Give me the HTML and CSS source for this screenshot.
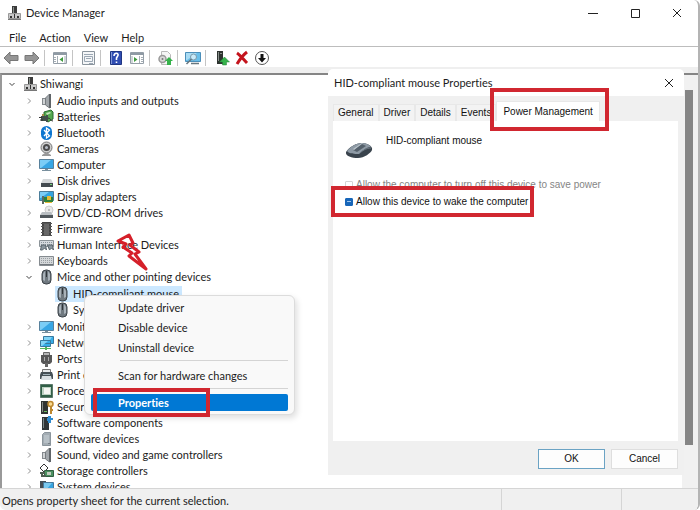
FILE: index.html
```html
<!DOCTYPE html>
<html lang="en">
<head>
<meta charset="utf-8">
<title>Device Manager</title>
<link rel="stylesheet" href="styles.css">
</head>
<body>
<svg class="sprite" aria-hidden="true">
  <symbol id="pc" viewBox="0 0 16 16"><path fill="#3c3c3c" d="M6 1h5v8H6z"/><path fill="#8d9590" d="M7 2h1v6H7z"/><path fill="#c9c9c9" stroke="#999" d="M2.500 8.500h12v5h-12z"/><path fill="#333" d="M4 11h2v2H4zM11 11h2v2h-2zM8 9h1v4H8z"/><path fill="#777" d="M2 14h13v1H2z"/></symbol>
  <symbol id="speaker" viewBox="0 0 16 16"><path fill="#858a8e" d="M3 5h4v7H3z"/><path fill="#a3a8ac" stroke="#777c80" d="M6.500 5l4-4v14l-4-3z"/><path fill="#5f6468" d="M10 1h2v14h-2z"/><path fill="#d0d3d5" d="M4 6h2v5H4z"/></symbol>
  <symbol id="battery" viewBox="0 0 16 16"><path fill="#54a84f" stroke="#2b6a30" d="M5 3l7-2 2 2v7l-5 3-4-3z"/><path fill="#c8e6bf" d="M7 4l4-1 1 1-4 2z"/><path fill="#41504a" d="M2 7h5V6h2v7H7v-1H2z"/><path fill="none" stroke="#333" d="M0 8.500h3M1 11h3M9 9c3 0 2 3 5 3"/><path fill="#a78d4d" d="M3 5h2v2H3z"/></symbol>
  <symbol id="bt" viewBox="0 0 16 16"><rect x="2" y="1" width="11" height="14" rx="5.500" fill="#0c76d0"/><path fill="none" stroke="#fff" stroke-width="1.300" d="M5 5l5.500 6-3 2V3l3 2L5 11"/></symbol>
  <symbol id="camera" viewBox="0 0 16 16"><circle cx="7.500" cy="6.500" r="5.500" fill="#cfcfcf" stroke="#777"/><circle cx="7.500" cy="6.500" r="3.500" fill="#4c4c4c"/><circle cx="7.500" cy="6.500" r="1.500" fill="#b8bec8"/><path fill="#999" d="M3 14l3-2h3l3 2v1H3z"/></symbol>
  <symbol id="monitor" viewBox="0 0 16 16"><path fill="#38a6e4" stroke="#58819c" d="M.5 2.500h14v9H.5z"/><path fill="#7bcdf6" d="M1 3h11L2 11H1z"/><path fill="#79909e" d="M6 12h3v1h3v1H3v-1h3z"/></symbol>
  <symbol id="disk" viewBox="0 0 16 16"><path fill="#d4d7d9" d="M4 6h8l2 4H2z"/><path fill="#444b50" d="M2 10h12v4H2z"/><path fill="#73d477" d="M11 11h2v1h-2z"/></symbol>
  <symbol id="display" viewBox="0 0 16 16"><path fill="#35a4df" stroke="#4b7d9a" d="M.5 2.500h14v9H.5z"/><path fill="#7bcdf6" d="M1 3h9L2 9H1z"/><path fill="#2f813b" d="M5 8h9v5H5z"/><path fill="#e8bb36" d="M8 7h4v4H8zM6 13h7v1H6z"/><path fill="#5d6a64" d="M3 7h2v8H3z"/></symbol>
  <symbol id="dvd" viewBox="0 0 16 16"><circle cx="10" cy="5" r="4" fill="#e9e9e9" stroke="#ccc"/><circle cx="10" cy="5" r="1" fill="#aaa"/><path fill="#b9bec2" d="M3 7h9l2 3H1z"/><path fill="#50575c" d="M1 10h13v3H1z"/></symbol>
  <symbol id="chip" viewBox="0 0 16 16"><path fill="#454545" d="M3 1h9v14H3z"/><path fill="none" stroke="#555" d="M2 2.500h11M2 5.500h11M2 8.500h11M2 11.500h11M2 14.500h11"/><path fill="#676767" d="M5 3h5v11H5z"/></symbol>
  <symbol id="hid" viewBox="0 0 16 16"><path fill="#d5dade" stroke="#8b9398" d="M.5 3.500h14v6H.5z"/><path stroke="#8b969d" stroke-dasharray="1" d="M2 5.500h11M2 7.500h11"/><path fill="#8a969e" stroke="#59656c" d="M1.500 13l1-5h4l1 5-2-2-2 2zM8.500 8h5l1 5-2-2-2 2z"/></symbol>
  <symbol id="keyboard" viewBox="0 0 16 16"><path fill="#d4d7d9" stroke="#858b90" d="M.5 3.500h14v9H.5z"/><path stroke="#999fa3" stroke-dasharray="1 1" d="M2 5.500h11M2 7.500h11M2 9.500h11"/><path fill="#72787d" d="M1 11h13v1H1z"/></symbol>
  <symbol id="mouse" viewBox="0 0 16 16"><rect x="3" y="1" width="9" height="14" rx="4" fill="#707980" stroke="#3b4248"/><path fill="#a9b2b9" d="M4 5l2-3v10l-2-1zM9 2l2 3v6l-2 1z"/><path fill="#303539" d="M7 2h1v6H7z"/></symbol>
  <symbol id="network" viewBox="0 0 16 16"><path fill="#37aee9" stroke="#397a9f" d="M4.500 1.500h10v7h-10zM1.500 5.500h10v6h-10z"/><path fill="#81d4f6" d="M5 2h8l-2 3H5zM2 6h7l-6 5H2z"/><path fill="#55b65b" d="M1 13h11v1H1zM6 12h2v3H6z"/></symbol>
  <symbol id="port" viewBox="0 0 16 16"><path fill="#b6b6b6" stroke="#686868" d="M4.500 1.500h6v4h-6z"/><path fill="#575757" d="M2 4h11v7l-2 2H4l-2-2z"/><path fill="#aaa" d="M5 6h1v4H5zM9 6h1v4H9z"/><path fill="#666" d="M6 12h3v4H6z"/></symbol>
  <symbol id="printer" viewBox="0 0 16 16"><path fill="#e6eaec" stroke="#777" d="M3.500 2.500h8v4h-8z"/><path fill="#455056" d="M2 5h11l1 3v4H1V8z"/><path fill="#d9e0e4" d="M3 9h9l1 4H2z"/><path fill="#9fb0b8" d="M4 7h7v1H4z"/></symbol>
  <symbol id="cpu" viewBox="0 0 16 16"><path fill="#315f46" stroke="#214532" stroke-dasharray="1 1" d="M1.500 1.500h12v13h-12z"/><path fill="#bdd1c2" d="M3 4h9v8H3z"/><path fill="#f5f6f2" d="M5 5h6v6H5z"/></symbol>
  <symbol id="security" viewBox="0 0 16 16"><path fill="#303432" d="M2 2h7v13H2z"/><path fill="#858b87" d="M3 3h1v10H3z"/><path fill="#6bbf5f" d="M5 12h3v1H5z"/><circle cx="11.500" cy="5" r="2.500" fill="#f8d98f" stroke="#bc8830" stroke-width="1.500"/><path fill="none" stroke="#bc8830" stroke-width="2" d="M12 8v7M12 11h2"/></symbol>
  <symbol id="component" viewBox="0 0 16 16"><path fill="#303638" d="M3 2h7v13H3z"/><path fill="#7b8788" d="M4 3h1v10H4z"/><path fill="#2f8bce" d="M9 1h3v2h2v2h-2v3H9V6H8V3h1z"/></symbol>
  <symbol id="software" viewBox="0 0 16 16"><path fill="#a3acb3" stroke="#8b959c" d="M3.500 3.500l2-2h6v13h-8z"/><path fill="#b7c0c6" d="M5 4h5v8H5z"/><path fill="#778087" d="M9 12h2v1H9z"/></symbol>
  <symbol id="storage" viewBox="0 0 16 16"><path fill="#fff" stroke="#333" d="M1 5l4-4 4 4-4 4z"/><path fill="#4c9160" stroke="#315e40" d="M5.500 7.500h9v6h-9z"/><path fill="#c2ccbe" d="M8 9h4v3H8z"/><path fill="none" stroke="#4e5d50" stroke-width="2" d="M1 10h5M3 9v4h4"/></symbol>
  <symbol id="system" viewBox="0 0 16 16"><path fill="#454e54" d="M1 2h6v13H1z"/><path fill="#36a3df" stroke="#47799a" d="M4.500 3.500h10v8h-10z"/><path fill="#7ac9ef" d="M5 4h8l-6 7H5z"/></symbol>
  <symbol id="back" viewBox="0 0 16 16"><path fill="#969696" stroke="#777" d="M1 8l6-6v3.500h8v5H7V14z"/></symbol>
  <symbol id="forward" viewBox="0 0 16 16"><path fill="#969696" stroke="#777" d="M15 8L9 2v3.500H1v5h8V14z"/></symbol>
  <symbol id="pane" viewBox="0 0 16 16"><path fill="#fff" stroke="#959fa8" d="M1.500 2.500h13v11h-13z"/><path fill="#8f9aa4" d="M1 3h14v2H1z"/><path stroke="#a5aeb5" d="M5.500 6v7M2 7.500h2M2 9.500h2M2 11.500h2M13 6v7"/><path fill="#3f9a3f" d="M11 7v5L7.500 9.500z"/></symbol>
  <symbol id="actions" viewBox="0 0 16 16"><path fill="#fff" stroke="#959fa8" d="M1.500 2.500h13v11h-13z"/><path fill="#8f9aa4" d="M1 3h14v2H1z"/><path stroke="#a5aeb5" d="M10.500 6v7M3 6v7M12 7.500h2M12 9.500h2M12 11.500h2"/><path fill="#3f9a3f" d="M5 7v5l3.500-2.500z"/></symbol>
  <symbol id="sheet" viewBox="0 0 16 16"><path fill="#f4f6f8" stroke="#8a949d" d="M2.500 1.500h12v13h-12z"/><path fill="none" stroke="#9ca8b4" d="M4 4.500h9M4.500 6.500h8v5h-8zM6 8.500h5M9 13.500h4"/></symbol>
  <symbol id="help" viewBox="0 0 16 16"><path fill="#304db2" stroke="#203682" d="M2.500 1.500h11v13h-11z"/><path fill="#8096d8" d="M3 2h1v12H3z"/><path fill="none" stroke="#fff" stroke-width="1.600" d="M6 6c0-4 5-3 4-.5L8.500 8v2M8.500 11.500v1.500"/></symbol>
  <symbol id="scan" viewBox="0 0 16 16"><path fill="#f5f5f5" stroke="#b9b9b9" d="M4.500 1.500h6l3 3v10h-9z"/><circle cx="5.500" cy="9" r="3.500" fill="#d8d8d8" stroke="#999" stroke-width="1.500"/><circle cx="5.500" cy="9" r="1" fill="#777"/><path fill="#35b24a" d="M12 7l4 4h-2v4h-4v-4H8z"/></symbol>
  <symbol id="search" viewBox="0 0 16 16"><path fill="#69bee9" stroke="#4b8eb9" d="M.5 2.500h15v9H.5z"/><path fill="#a9dcf4" d="M1 3h11L2 10H1z"/><circle cx="8.500" cy="7" r="3" fill="#caeaf8" stroke="#7b99aa"/><path fill="none" stroke="#68777f" stroke-width="1.500" d="M6.500 9l-5 5M6 13.500h8"/></symbol>
  <symbol id="update" viewBox="0 0 16 16"><path fill="#2e3330" d="M3 1h6v13H3z"/><path fill="#89908c" d="M4 2h1v9H4zM6 3h2v1H6z"/><path fill="#35b24a" stroke="#228336" stroke-width=".5" d="M10.500 7l5 5h-3v3h-4v-3h-3z"/></symbol>
  <symbol id="remove" viewBox="0 0 16 16"><path fill="none" stroke="#c4141d" stroke-width="3" d="M3 3c3 2 6 6 10 10M13 2C9 5 6 9 3 14"/></symbol>
  <symbol id="down" viewBox="0 0 16 16"><circle cx="8" cy="8" r="6.500" fill="#fff" stroke="#555"/><path fill="#111" d="M6.500 4h3v4H12l-4 4.500L4 8h2.500z"/></symbol>
  <symbol id="chev" viewBox="0 0 8 8"><path fill="none" stroke="#909090" d="M3 1.500L5.500 4 3 6.500"/></symbol>
  <symbol id="open" viewBox="0 0 8 8"><path fill="none" stroke="#444" d="M1.500 3L4 5.500 6.500 3"/></symbol>
  <symbol id="close" viewBox="0 0 10 10"><path fill="none" stroke="#222" d="M1 1l8 8M9 1L1 9"/></symbol>
</svg>

<div class="window">
  <header class="titlebar">
    <svg class="icon"><use href="#pc"/></svg>
    <h1>Device Manager</h1>
    <div class="controls">
      <button aria-label="Minimize"><svg viewBox="0 0 10 10"><path stroke="#222" d="M0 5.500h10"/></svg></button>
      <button aria-label="Maximize"><svg viewBox="0 0 10 10"><path fill="none" stroke="#222" d="M1.500 1.500h8v8h-8z"/></svg></button>
      <button aria-label="Close"><svg><use href="#close"/></svg></button>
    </div>
  </header>
  <nav class="menubar">
    <button>File</button><button>Action</button><button>View</button><button>Help</button>
  </nav>
  <div class="toolbar">
    <div class="tools"><button aria-label="Back"><svg class="icon"><use href="#back"/></svg></button><button aria-label="Forward"><svg class="icon"><use href="#forward"/></svg></button></div>
    <div class="tools"><button aria-label="Console tree"><svg class="icon"><use href="#pane"/></svg></button></div>
    <div class="tools"><button aria-label="Properties"><svg class="icon"><use href="#sheet"/></svg></button></div>
    <div class="tools"><button aria-label="Help"><svg class="icon"><use href="#help"/></svg></button><button aria-label="Action pane"><svg class="icon"><use href="#actions"/></svg></button></div>
    <div class="tools"><button aria-label="Update driver"><svg class="icon"><use href="#scan"/></svg></button></div>
    <div class="tools"><button aria-label="Scan for hardware changes"><svg class="icon"><use href="#search"/></svg></button></div>
    <div class="tools"><button aria-label="Enable device"><svg class="icon"><use href="#update"/></svg></button><button aria-label="Uninstall device"><svg class="icon"><use href="#remove"/></svg></button><button aria-label="Disable device"><svg class="icon"><use href="#down"/></svg></button></div>
  </div>
  <main class="content">
    <ul class="tree">
      <li><div class="row"><svg class="arrow"><use href="#open"/></svg><svg class="icon"><use href="#pc"/></svg>Shiwangi</div>
        <ul>
          <li class="row"><svg class="arrow"><use href="#chev"/></svg><svg class="icon"><use href="#speaker"/></svg>Audio inputs and outputs</li>
          <li class="row"><svg class="arrow"><use href="#chev"/></svg><svg class="icon"><use href="#battery"/></svg>Batteries</li>
          <li class="row"><svg class="arrow"><use href="#chev"/></svg><svg class="icon"><use href="#bt"/></svg>Bluetooth</li>
          <li class="row"><svg class="arrow"><use href="#chev"/></svg><svg class="icon"><use href="#camera"/></svg>Cameras</li>
          <li class="row"><svg class="arrow"><use href="#chev"/></svg><svg class="icon"><use href="#monitor"/></svg>Computer</li>
          <li class="row"><svg class="arrow"><use href="#chev"/></svg><svg class="icon"><use href="#disk"/></svg>Disk drives</li>
          <li class="row"><svg class="arrow"><use href="#chev"/></svg><svg class="icon"><use href="#display"/></svg>Display adapters</li>
          <li class="row"><svg class="arrow"><use href="#chev"/></svg><svg class="icon"><use href="#dvd"/></svg>DVD/CD-ROM drives</li>
          <li class="row"><svg class="arrow"><use href="#chev"/></svg><svg class="icon"><use href="#chip"/></svg>Firmware</li>
          <li class="row"><svg class="arrow"><use href="#chev"/></svg><svg class="icon"><use href="#hid"/></svg>Human Interface Devices</li>
          <li class="row"><svg class="arrow"><use href="#chev"/></svg><svg class="icon"><use href="#keyboard"/></svg>Keyboards</li>
          <li><div class="row"><svg class="arrow"><use href="#open"/></svg><svg class="icon"><use href="#mouse"/></svg>Mice and other pointing devices</div>
            <ul class="leaves">
              <li class="row selected"><svg class="icon"><use href="#mouse"/></svg>HID-compliant mouse</li>
              <li class="row"><svg class="icon"><use href="#mouse"/></svg>Sy</li>
            </ul>
          </li>
          <li class="row"><svg class="arrow"><use href="#chev"/></svg><svg class="icon"><use href="#monitor"/></svg>Monitors</li>
          <li class="row"><svg class="arrow"><use href="#chev"/></svg><svg class="icon"><use href="#network"/></svg>Network</li>
          <li class="row"><svg class="arrow"><use href="#chev"/></svg><svg class="icon"><use href="#port"/></svg>Ports</li>
          <li class="row"><svg class="arrow"><use href="#chev"/></svg><svg class="icon"><use href="#printer"/></svg>Print queues</li>
          <li class="row"><svg class="arrow"><use href="#chev"/></svg><svg class="icon"><use href="#cpu"/></svg>Processors</li>
          <li class="row"><svg class="arrow"><use href="#chev"/></svg><svg class="icon"><use href="#security"/></svg>Security</li>
          <li class="row"><svg class="arrow"><use href="#chev"/></svg><svg class="icon"><use href="#component"/></svg>Software components</li>
          <li class="row"><svg class="arrow"><use href="#chev"/></svg><svg class="icon"><use href="#software"/></svg>Software devices</li>
          <li class="row"><svg class="arrow"><use href="#chev"/></svg><svg class="icon"><use href="#speaker"/></svg>Sound, video and game controllers</li>
          <li class="row"><svg class="arrow"><use href="#chev"/></svg><svg class="icon"><use href="#storage"/></svg>Storage controllers</li>
          <li class="row"><svg class="arrow"><use href="#chev"/></svg><svg class="icon"><use href="#system"/></svg>System devices</li>
        </ul>
      </li>
    </ul>
    <div class="scrollbar"><div class="thumb"></div></div>
  </main>
  <footer class="statusbar"><span>Opens property sheet for the current selection.</span><span></span><span></span></footer>

  <div class="context" role="menu">
    <button role="menuitem">Update driver</button>
    <button role="menuitem">Disable device</button>
    <button role="menuitem">Uninstall device</button>
    <hr>
    <button role="menuitem">Scan for hardware changes</button>
    <hr>
    <button role="menuitem" class="active">Properties</button>
  </div>

  <section class="dialog" role="dialog" aria-labelledby="dialog-title">
    <header><h2 id="dialog-title">HID-compliant mouse Properties</h2><button aria-label="Close"><svg><use href="#close"/></svg></button></header>
    <div class="dialog-body">
      <div class="tabs" role="tablist">
        <button role="tab">General</button><button role="tab">Driver</button><button role="tab">Details</button><button role="tab">Events</button><button role="tab" class="current" aria-selected="true">Power Management</button>
      </div>
      <div class="panel" role="tabpanel">
        <div class="device">
          <svg viewBox="0 0 28 18"><path fill="#39434c" d="M1 11c3-5 10-9 16-9 5 0 11 3 10 7-1 3-8 8-14 8C7 17 0 15 1 11z"/><path fill="#8e9aa5" d="M2 10C6 5 12 2 17 2c3 0 7 1 9 4-4 0-8 3-12 7-4 0-10 0-12-3z"/><path fill="#55616c" d="M8 9l9-6 4 2-9 6z"/><path fill="#bdc6cd" d="M8 8l9-6h1L9 9z"/><path fill="none" stroke="#6c7883" d="M14 13c3-3 7-6 12-6"/></svg>
          <span>HID-compliant mouse</span>
        </div>
        <label class="off"><input type="checkbox" disabled>Allow the computer to turn off this device to save power</label>
        <label><input type="checkbox" checked>Allow this device to wake the computer</label>
      </div>
      <div class="buttons"><button class="default">OK</button><button>Cancel</button></div>
    </div>
  </section>

  <div class="mark mark-properties"></div>
  <div class="mark mark-tab"></div>
  <div class="mark mark-wake"></div>
  <svg class="bolt" viewBox="0 0 34 38"><path fill="none" stroke="#d5202a" stroke-width="3" stroke-linejoin="round" d="M2 8L13 2l4 8-3 2 9 7-4 2 11 15-17-13 3-3-9-6 3-3z"/></svg>
</div>
</body>
</html>
```
FILE: styles.css
```css
* { box-sizing: border-box; }
body { margin: 0; font: 11px/16px Lato, "Open Sans", sans-serif; font-variant-ligatures: none; color: #1c1c1c; background: #fff; }
button { margin: 0; padding: 0; border: 0; background: none; font: inherit; color: inherit; }
ul { list-style: none; margin: 0; padding: 0; }
h1, h2 { margin: 0; font: inherit; }
svg { display: block; flex: none; }
.sprite { position: absolute; width: 0; height: 0; }
.icon { width: 16px; height: 16px; }

.window { position: relative; display: flex; flex-direction: column; height: 100vh; border-right: 2px solid #b4b4b4; border-radius: 6px; overflow: hidden; }
.titlebar { display: flex; align-items: center; gap: 4px; height: 26px; padding-left: 6px; }
.titlebar h1 { flex: 1; }
.controls { display: flex; gap: 32px; padding-right: 16px; }
.controls svg, .dialog header svg { width: 10px; height: 10px; }
.menubar { display: flex; gap: 13px; height: 20px; padding: 3px 9px 0; }
.toolbar { display: flex; align-items: center; height: 27px; padding: 0 3px 5px; border-top: 1px solid #bdbdbd; background: linear-gradient(#fff 20px, #efefef 20px); }
.tools { display: flex; gap: 5px; padding: 0 4px 0 7px; border-left: 1px solid #c4c4c4; }
.tools:first-child { padding-left: 0; border: 0; }
.tools:last-child { gap: 4px; padding-left: 8px; }

.content { flex: 1; min-height: 0; display: flex; border-top: 2px solid #858585; border-left: 2px solid #999; overflow: hidden; }
.tree { flex: 1; padding: 1px 0 0 6px; white-space: nowrap; }
.row { display: flex; align-items: center; height: 16px; gap: 6px; }
.row .icon { margin-right: -4px; }
.arrow { width: 8px; height: 8px; }
.tree ul { margin-top: 1px; padding-left: 17px; }
.tree .leaves { margin-bottom: 1px; padding-left: 30px; }
.selected { width: max-content; padding-right: 3px; background: #cce8ff; }
.scrollbar { width: 16px; padding: 15px 5px 43px 3px; background: #f1f1f1; }
.thumb { height: 100%; background: #858585; }

.statusbar { display: flex; height: 22px; border-top: 1px solid #d5d5d5; background: #f0f0f0; line-height: 24px; }
.statusbar span { width: 120px; border-left: 1px solid #d5d5d5; }
.statusbar span:first-child { flex: 1; padding-left: 2px; border: 0; }
.statusbar span:last-child { width: 77px; }

.context { position: absolute; left: 84px; top: 295px; width: 211px; padding: 2px 6px 3px; border: 1px solid #dcdcdc; border-radius: 6px; background: #f9f9f9; box-shadow: 2px 3px 6px #0002; }
.context button { display: block; width: 100%; height: 20px; padding-left: 27px; text-align: left; line-height: 18px; }
.context hr { height: 1px; margin: 2px 0 5px 29px; border: 0; background: #d4d4d4; }
.context .active { height: 17px; border-radius: 2px; background: #0078d4; color: #fff; font-weight: 700; line-height: 16px; }

.dialog { position: absolute; left: 328px; top: 69px; width: 356px; height: 406px; display: flex; flex-direction: column; border-radius: 5px 5px 0 0; background: #f0f0f0; overflow: hidden; }
.dialog header { display: flex; align-items: center; justify-content: space-between; height: 27px; padding: 0 10px 0 6px; background: #fff; }
.dialog-body { flex: 1; display: flex; flex-direction: column; padding: 5px 6px 6px 5px; font-family: "Liberation Sans", Arial, sans-serif; font-size: 10px; color: #111; }
.tabs { display: flex; align-items: flex-end; height: 20px; }
.tabs button { height: 17px; padding: 0 4px; border: 1px solid #e8e8e8; border-bottom: 0; background: #f3f3f3; }
.tabs .current { height: 20px; padding: 0 6px; background: #fff; }
.panel { flex: 1; padding: 12px; background: #fff; }
.device { display: flex; gap: 13px; height: 43px; }
.device svg { width: 28px; height: 18px; margin-top: 8px; }
.panel label { display: flex; align-items: center; gap: 3px; height: 17px; }
.panel label input { appearance: none; width: 8px; height: 8px; margin: 0; border: 1px solid #d4d4d4; border-radius: 1px; }
.panel label input:checked { border-color: #1766b9; background: linear-gradient(#9dc6ee, #9dc6ee) center / 4px 1px no-repeat #1766b9; }
.panel .off { color: #858585; }
.buttons { display: flex; justify-content: flex-end; gap: 6px; padding-top: 8px; }
.buttons button { width: 67px; height: 20px; border: 1px solid #dedede; background: #fdfdfd; }
.buttons .default { border-color: #6ba3c4; }

.mark { position: absolute; border: 4px solid #d12730; }
.mark-properties { left: 93px; top: 388px; width: 117px; height: 29px; }
.mark-tab { left: 490px; top: 88px; width: 119px; height: 43px; }
.mark-wake { left: 331px; top: 186px; width: 203px; height: 31px; }
.bolt { position: absolute; left: 116px; top: 233px; width: 34px; height: 38px; }
```
